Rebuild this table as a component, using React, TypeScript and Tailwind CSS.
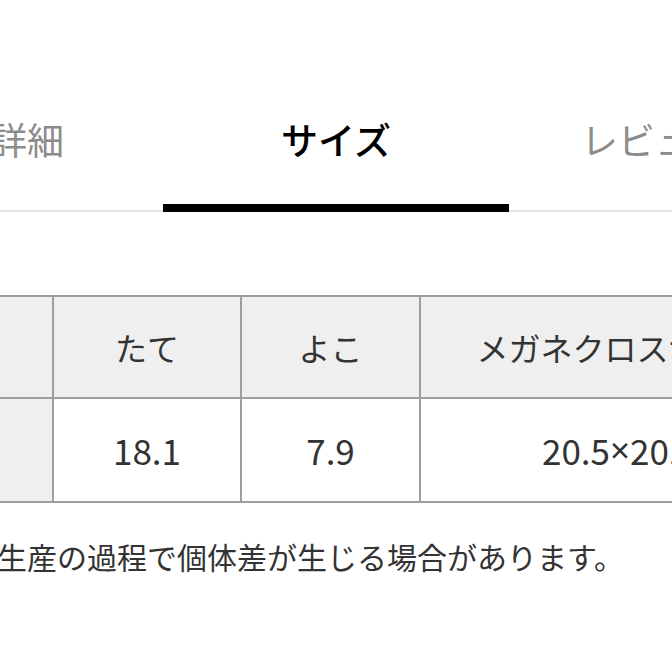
import * as React from "react";

const tabs = [
  { label: "商品詳細", width: "w-[346px]", active: false },
  { label: "サイズ", width: "w-[346px]", active: true },
  { label: "レビュー", width: "w-[292px]", active: false },
];

export default function App() {
  return (
    <div className="w-[672px] h-[672px] overflow-hidden bg-white font-['Noto_Sans_CJK_JP',sans-serif]">
      {/* Tabs */}
      <div className="mt-[121px] flex w-[672px] border-b-2 border-[#e2e2e2]">
        <div className="flex shrink-0 ml-[-183px]">
          {tabs.map((t) => (
            <div
              key={t.label}
              className={
                t.active
                  ? `${t.width} shrink-0 -mb-[2px] pb-[46px] border-b-[8px] border-black text-center text-[37px] leading-none font-medium text-black`
                  : `${t.width} shrink-0 -mb-[2px] pb-[46px] border-b-[8px] border-transparent text-center text-[37px] leading-none text-[#8c8c8c]`
              }
            >
              {t.label}
            </div>
          ))}
        </div>
      </div>

      {/* Size table */}
      <div className="mt-[83px] ml-[-128px] w-max border-t-2 border-l-2 border-[#9e9e9e] text-[32px] text-[#333]">
        <div className="flex bg-[#efefef]">
          <div className="w-[180px] h-[102px] border-r-2 border-b-2 border-[#9e9e9e]" />
          <div className="w-[188px] h-[102px] border-r-2 border-b-2 border-[#9e9e9e] flex items-center justify-center">たて</div>
          <div className="w-[179px] h-[102px] border-r-2 border-b-2 border-[#9e9e9e] flex items-center justify-center">よこ</div>
          <div className="w-[400px] h-[102px] border-r-2 border-b-2 border-[#9e9e9e] flex items-center justify-center">メガネクロスサイズ</div>
        </div>
        <div className="flex text-[35px]">
          <div className="w-[180px] h-[104px] border-r-2 border-b-2 border-[#9e9e9e] bg-[#efefef]" />
          <div className="w-[188px] h-[104px] border-r-2 border-b-2 border-[#9e9e9e] flex items-center justify-center">18.1</div>
          <div className="w-[179px] h-[104px] border-r-2 border-b-2 border-[#9e9e9e] flex items-center justify-center">7.9</div>
          <div className="w-[400px] h-[104px] border-r-2 border-b-2 border-[#9e9e9e] flex items-center justify-center">
            20.5<span className="font-['Noto_Sans',sans-serif]">×</span>20.5
          </div>
        </div>
      </div>

      <p className="mt-[38px] ml-[-3px] whitespace-nowrap text-[30px] leading-none text-[#333]">
        生産の過程で個体差が生じる場合があります。
      </p>
    </div>
  );
}
